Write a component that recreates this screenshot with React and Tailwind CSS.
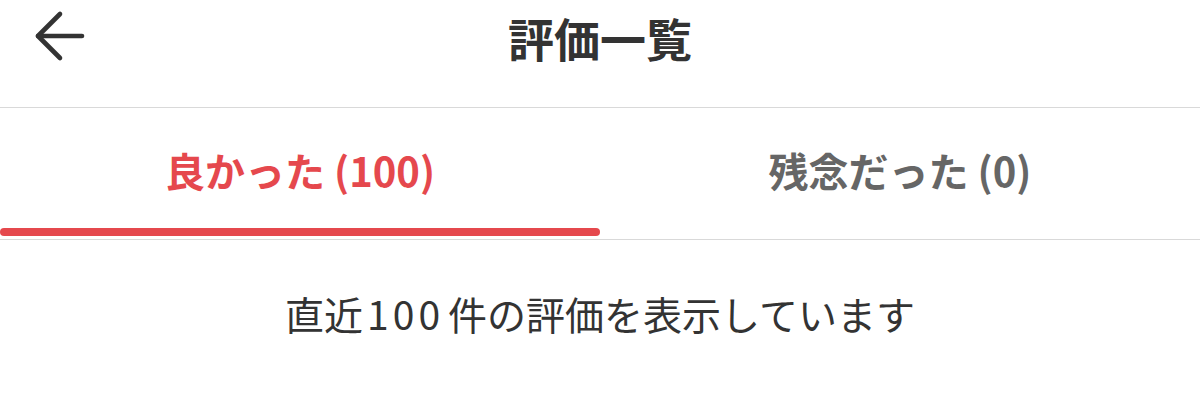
import React from "react";

export default function App() {
  const font = { fontFamily: '"Noto Sans CJK JP", "Noto Sans", sans-serif' };
  return (
    <div className="w-[1200px] h-[401px] bg-white overflow-hidden" style={font}>
      <header className="h-[108px] grid grid-cols-[1fr_auto_1fr] items-start border-b border-[#d9d9d9]">
        <div className="pl-[34px] pt-[10px] flex items-center">
          <svg width="52" height="52" viewBox="0 0 52 52" fill="none" stroke="#333333" strokeWidth="4.6" strokeLinecap="round" strokeLinejoin="round">
            <path d="M4 26 H48" />
            <path d="M26 4 L4 26 L26 48" />
          </svg>
        </div>
        <h1 className="text-[46px] leading-none font-bold text-[#333333] pt-[14px]">評価一覧</h1>
        <div />
      </header>
      <nav className="h-[132px] grid grid-cols-2 border-b border-[#d9d9d9]">
        <div className="flex flex-col">
          <div className="flex-1 flex items-center justify-center pt-[4px]">
            <span className="text-[40px] leading-none font-bold text-[#e5484d]">良かった (100)</span>
          </div>
          <div className="h-[8px] rounded-full bg-[#e5484d] mb-[3px]" />
        </div>
        <div className="flex flex-col">
          <div className="flex-1 flex items-center justify-center pt-[4px]">
            <span className="text-[40px] leading-none font-bold text-[#666666]">残念だった (0)</span>
          </div>
          <div className="h-[8px] mb-[3px]" />
        </div>
      </nav>
      <div className="flex justify-center pt-[54px]">
        <p className="text-[39px] leading-none text-[#333333]">
          直近<span className="ml-[4px] mr-[4px] tracking-[4px]">100</span>件の評価を表示しています
        </p>
      </div>
    </div>
  );
}
